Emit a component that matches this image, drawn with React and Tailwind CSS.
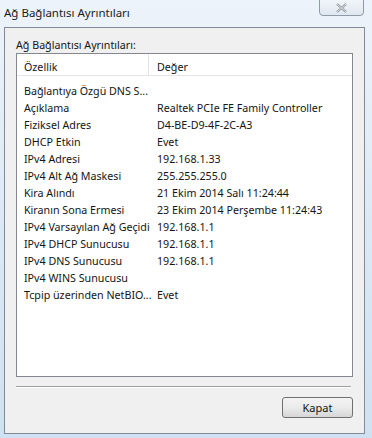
const rows = [
  ["Bağlantıya Özgü DNS S...", ""],
  ["Açıklama", "Realtek PCIe FE Family Controller"],
  ["Fiziksel Adres", "D4-BE-D9-4F-2C-A3"],
  ["DHCP Etkin", "Evet"],
  ["IPv4 Adresi", "192.168.1.33"],
  ["IPv4 Alt Ağ Maskesi", "255.255.255.0"],
  ["Kira Alındı", "21 Ekim 2014 Salı 11:24:44"],
  ["Kiranın Sona Ermesi", "23 Ekim 2014 Perşembe 11:24:43"],
  ["IPv4 Varsayılan Ağ Geçidi", "192.168.1.1"],
  ["IPv4 DHCP Sunucusu", "192.168.1.1"],
  ["IPv4 DNS Sunucusu", "192.168.1.1"],
  ["IPv4 WINS Sunucusu", ""],
  ["Tcpip üzerinden NetBIO...", "Evet"],
];

export default function App() {
  return (
    <div
      className="w-[372px] h-[438px] overflow-hidden flex flex-col bg-gradient-to-b from-[#edf3fa] via-[#dce9f5] to-[#d0e1f1] text-[10.7px] text-[#151515]"
      style={{ fontFamily: '"Segoe UI", "Noto Sans", sans-serif' }}
    >
      {/* title bar */}
      <div className="h-[27px] flex items-start justify-between pl-[4px] pr-[8px]">
        <div className="mt-[5px] text-[11.5px] leading-[16px] text-[#1b1b1b]">Ağ Bağlantısı Ayrıntıları</div>
        <div className="mt-[-3px] w-[45px] h-[19px] rounded-b-[4px] border border-[#8e9aa8] bg-gradient-to-b from-[#f4f7fa] to-[#dfe7ef] flex items-center justify-center">
          <svg width="11" height="10" viewBox="0 0 11 10" className="mt-[3px]">
            <path d="M1 1 L10 9 M10 1 L1 9" stroke="#8a8f96" strokeWidth="2.2" fill="none" />
            <path d="M1 1 L10 9 M10 1 L1 9" stroke="#f4f4f4" strokeWidth="0.8" fill="none" />
          </svg>
        </div>
      </div>

      {/* client area */}
      <div className="ml-[4px] mr-[7px] h-[407px] border border-[#7f8b99] bg-[#f0f0f0] flex flex-col px-[11px]">
        <div className="pt-[9px] leading-[16px]">Ağ Bağlantısı Ayrıntıları:</div>

        <div className="h-[324px] border border-[#828790] bg-white flex flex-col">
          <div className="h-[22px] flex border-b border-[#e5e5e5] leading-[16px]">
            <div className="w-[132px] h-full border-r border-[#e5e5e5] flex items-end pl-[7px]">Özellik</div>
            <div className="flex-1 h-full flex items-end pl-[8px]">Değer</div>
          </div>
          <div className="pt-[6px]">
            {rows.map(([k, v], i) => (
              <div key={i} className="flex h-[17px] items-center leading-[16px] whitespace-nowrap">
                <div className="w-[133px] shrink-0 pl-[7px]">{k}</div>
                <div className="pl-[7px]">{v}</div>
              </div>
            ))}
          </div>
        </div>

        <div className="mt-[9px] mr-[2px] border-t border-[#a0a0a0] border-b border-b-white" />

        <div className="mt-[9px] flex justify-end">
          <button className="w-[71px] h-[21px] rounded-[3px] border border-[#707070] bg-gradient-to-b from-[#f3f3f3] via-[#ebebeb] to-[#d6d6d6] text-[11px] leading-[16px] text-[#111]">
            Kapat
          </button>
        </div>
      </div>
    </div>
  );
}
